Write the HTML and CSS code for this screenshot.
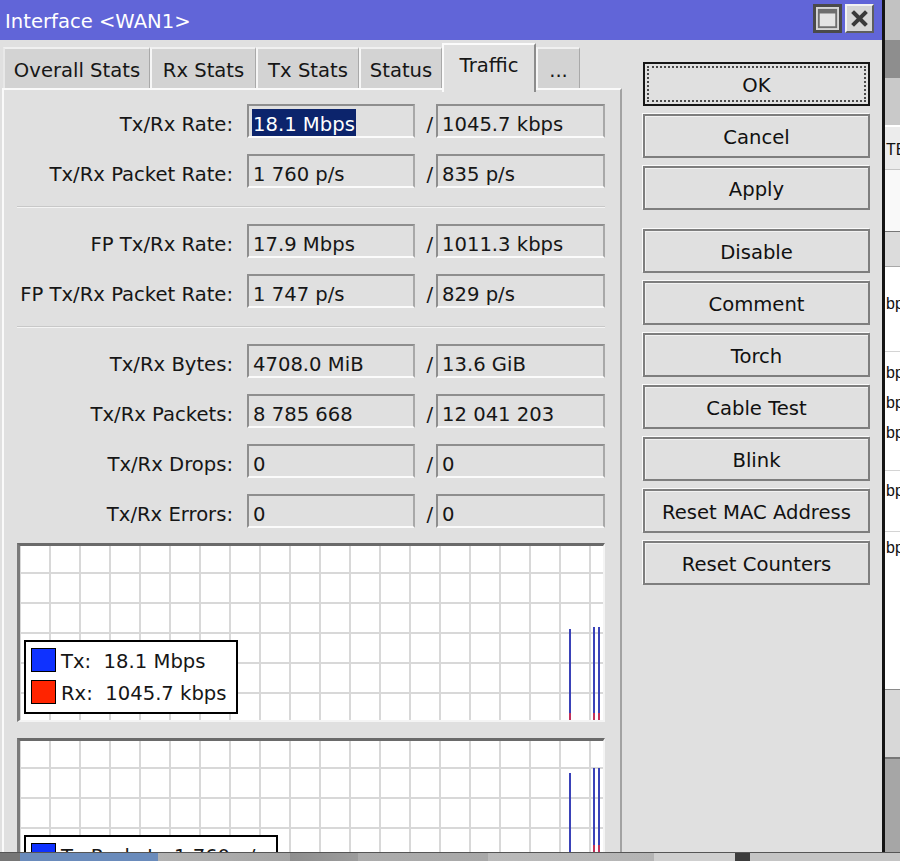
FILE: index.html
```html
<!DOCTYPE html>
<html>
<head>
<meta charset="utf-8">
<title>Interface &lt;WAN1&gt;</title>
<link rel="stylesheet" href="styles.css">
</head>
<body>
<div class="screen">
  <div class="window">
    <div class="titlebar">
      <span class="title">Interface &lt;WAN1&gt;</span>
      <div class="tb-btns">
        <span class="tb-btn tb-max"><svg width="23" height="23" viewBox="0 0 23 23"><rect x="2" y="2" width="19" height="19" fill="#e4e4e4" stroke="#6e6e6e" stroke-width="2"/><rect x="2" y="2" width="19" height="4" fill="#6e6e6e"/></svg></span>
        <span class="tb-btn tb-close"><svg width="23" height="23" viewBox="0 0 23 23"><path d="M6 6 L17 17 M17 6 L6 17" stroke="#3a3a3a" stroke-width="4" stroke-linecap="square"/></svg></span>
      </div>
    </div>
    <div class="main">
      <div class="left">
        <div class="tabs">
          <div class="tab t-overall">Overall Stats</div>
          <div class="tab t-rx">Rx Stats</div>
          <div class="tab t-tx">Tx Stats</div>
          <div class="tab t-status">Status</div>
          <div class="tab tab-active t-traffic">Traffic</div>
          <div class="tab t-more">...</div>
        </div>
        <div class="panel">
          <div class="section">
            <div class="row"><span class="label">Tx/Rx Rate:</span><span class="field field-sel"><span class="sel">18.1 Mbps</span></span><span class="slash">/</span><span class="field">1045.7 kbps</span></div>
            <div class="row"><span class="label">Tx/Rx Packet Rate:</span><span class="field">1 760 p/s</span><span class="slash">/</span><span class="field">835 p/s</span></div>
          </div>
          <div class="sep"></div>
          <div class="section">
            <div class="row"><span class="label">FP Tx/Rx Rate:</span><span class="field">17.9 Mbps</span><span class="slash">/</span><span class="field">1011.3 kbps</span></div>
            <div class="row"><span class="label">FP Tx/Rx Packet Rate:</span><span class="field">1 747 p/s</span><span class="slash">/</span><span class="field">829 p/s</span></div>
          </div>
          <div class="sep"></div>
          <div class="section">
            <div class="row"><span class="label">Tx/Rx Bytes:</span><span class="field">4708.0 MiB</span><span class="slash">/</span><span class="field">13.6 GiB</span></div>
            <div class="row"><span class="label">Tx/Rx Packets:</span><span class="field">8 785 668</span><span class="slash">/</span><span class="field">12 041 203</span></div>
            <div class="row"><span class="label">Tx/Rx Drops:</span><span class="field">0</span><span class="slash">/</span><span class="field">0</span></div>
            <div class="row"><span class="label">Tx/Rx Errors:</span><span class="field">0</span><span class="slash">/</span><span class="field">0</span></div>
          </div>
          <div class="graph g1">
            <svg class="plot" width="583" height="174" viewBox="0 0 583 174">
              <rect x="549" y="83" width="2" height="91" fill="#3a42b8"/>
              <rect x="573" y="81" width="2" height="93" fill="#3a42b8"/>
              <rect x="578" y="81" width="2" height="93" fill="#3a42b8"/>
              <rect x="549" y="167" width="2" height="7" fill="#c2305a"/>
              <rect x="573" y="167" width="2" height="7" fill="#c2305a"/>
              <rect x="578" y="167" width="2" height="7" fill="#c2305a"/>
            </svg>
            <div class="legend lg1">
              <div class="lg-row"><span class="sw sw-tx"></span><span class="lg-text">Tx:  18.1 Mbps</span></div>
              <div class="lg-row"><span class="sw sw-rx"></span><span class="lg-text">Rx:  1045.7 kbps</span></div>
            </div>
          </div>
          <div class="graph g2">
            <svg class="plot" width="583" height="174" viewBox="0 0 583 174">
              <rect x="549" y="32" width="2" height="142" fill="#3a42b8"/>
              <rect x="573" y="27" width="2" height="147" fill="#3a42b8"/>
              <rect x="578" y="27" width="2" height="147" fill="#3a42b8"/>
              <rect x="573" y="104" width="2" height="12" fill="#c2305a"/>
              <rect x="578" y="104" width="2" height="12" fill="#c2305a"/>
            </svg>
            <div class="legend lg2">
              <div class="lg-row"><span class="sw sw-tx"></span><span class="lg-text">Tx Packet:  1 760 p/s</span></div>
              <div class="lg-row"><span class="sw sw-rx"></span><span class="lg-text">Rx Packet:  835 p/s</span></div>
            </div>
          </div>
        </div>
      </div>
      <div class="buttons">
        <div class="btn btn-default"><span class="focus">OK</span></div>
        <div class="btn">Cancel</div>
        <div class="btn">Apply</div>
        <div class="btn btn-group">Disable</div>
        <div class="btn">Comment</div>
        <div class="btn">Torch</div>
        <div class="btn">Cable Test</div>
        <div class="btn">Blink</div>
        <div class="btn">Reset MAC Address</div>
        <div class="btn">Reset Counters</div>
      </div>
    </div>
  </div>
  <div class="behind">
    <div class="bh bh-top"></div>
    <div class="bh bh-dark"></div>
    <div class="bh bh-mid"></div>
    <div class="bh bh-head"><span>TE</span></div>
    <div class="bh bh-white1"></div>
    <div class="bh bh-hdr"></div>
    <div class="bh bh-list">
      <div class="sp sp27"></div>
      <div class="tx">bps</div>
      <div class="sp sp38 ln"></div>
      <div class="sp sp11"></div>
      <div class="tx">bps</div>
      <div class="sp sp10"></div>
      <div class="tx">bps</div>
      <div class="sp sp10"></div>
      <div class="tx">bps</div>
      <div class="sp sp28 ln"></div>
      <div class="sp sp10"></div>
      <div class="tx">bps</div>
      <div class="sp sp31 ln"></div>
      <div class="sp sp6"></div>
      <div class="tx">bps</div>
    </div>
    <div class="bh bh-foot"></div>
    <div class="bh bh-bottom"></div>
  </div>
</div>
<div class="taskbar"></div>
</body>
</html>
```
FILE: styles.css
```css
* { box-sizing: border-box; }
html, body { margin: 0; padding: 0; }
body {
  width: 900px;
  height: 861px;
  overflow: hidden;
  font-family: "DejaVu Sans", "Verdana", sans-serif;
  font-size: 19.6px;
  color: #161616;
  background: #c4c4c4;
}
.screen { display: flex; height: 852px; overflow: hidden; }

.window {
  width: 885px;
  flex: none;
  display: flex;
  flex-direction: column;
  background: #e0e0e0;
  border-right: 3px solid #141414;
  overflow: hidden;
}
.titlebar {
  height: 40px;
  flex: none;
  background: #6165d8;
  display: flex;
  align-items: center;
  justify-content: space-between;
  padding: 0 8px 3px 5px;
  color: #fff;
}
.title { white-space: nowrap; padding-top: 6px; }
.tb-btns { display: flex; gap: 3px; }
.tb-btn {
  width: 29px;
  height: 29px;
  display: flex;
  align-items: center;
  justify-content: center;
  background: #d6d6d6;
}
.tb-max { border: 3px solid #4a4a4a; }
.tb-max svg { width: 21px; height: 21px; }
.tb-close {
  border: 2px solid;
  border-color: #f2f2f2 #5e5e5e #5e5e5e #f2f2f2;
}

.main { display: flex; flex: 1; min-height: 0; }
.left { width: 622px; flex: none; display: flex; flex-direction: column; }

.tabs {
  height: 48px;
  flex: none;
  display: flex;
  align-items: flex-end;
  padding-left: 3px;
  position: relative;
  z-index: 2;
}
.tab {
  height: 41px;
  display: flex;
  align-items: center;
  justify-content: center;
  padding-top: 3px;
  background: #d3d3d3;
  border-left: 2px solid #f6f6f6;
  border-top: 2px solid #f0f0f0;
  border-right: 1px solid #a9a9a9;
  white-space: nowrap;
}
.t-overall { width: 147px; border-left-color: #e8e8e8; }
.t-rx { width: 106px; }
.t-tx { width: 103px; }
.t-status { width: 83px; }
.t-traffic { width: 94px; }
.t-more { width: 44px; }
.tab-active {
  height: 49px;
  margin-bottom: -4px;
  padding-top: 0;
  padding-bottom: 6px;
  background: #e0e0e0;
  border-left: 2px solid #fbfbfb;
  border-top: 2px solid #fbfbfb;
  border-right: 2px solid #8c8c8c;
}

.panel {
  flex: 1;
  margin-left: 2px;
  width: 620px;
  border-top: 2px solid #fafafa;
  border-left: 2px solid #fafafa;
  border-right: 2px solid #a2a2a2;
  padding-top: 14px;
  display: flex;
  flex-direction: column;
  overflow: hidden;
}
.section { display: flex; flex-direction: column; gap: 16px; }
.row {
  display: grid;
  grid-template-columns: 243px 168px 21px 169px;
  height: 34px;
  align-items: center;
}
.label { text-align: right; padding-right: 14px; padding-top: 6px; white-space: nowrap; }
.field {
  height: 34px;
  display: flex;
  align-items: center;
  padding-left: 4px;
  padding-top: 6px;
  white-space: nowrap;
  overflow: hidden;
  border: 2px solid;
  border-color: #8e8e8e #a8a8a8 #fbfbfb #8e8e8e;
}
.field-sel { padding-top: 2px; }
.sel {
  background: #0c246c;
  color: #fff;
  line-height: 22px;
  padding: 5px 1px 0;
  margin-left: -1px;
}
.slash { text-align: right; padding-right: 3px; padding-top: 6px; }
.sep {
  margin: 18px 0 16px 13px;
  width: 588px;
  height: 2px;
  flex: none;
  border-top: 1px solid #c8c8c8;
  border-bottom: 1px solid #f4f4f4;
}

.graph {
  position: relative;
  flex: none;
  margin-left: 13px;
  width: 588px;
  height: 179px;
  border-style: solid;
  border-width: 3px 2px 2px 3px;
  border-color: #6a6a6a #f4f4f4 #f4f4f4 #7a7a7a;
  background-color: #fff;
  background-image:
    linear-gradient(to right, #d8d8d8 2px, transparent 2px),
    linear-gradient(to bottom, #d8d8d8 2px, transparent 2px);
  background-size: 30px 30px;
  background-position: 29px 26px;
}
.g1 { margin-top: 15px; }
.g2 { margin-top: 16px; }
.plot { position: absolute; left: 0; top: 0; }
.legend {
  position: absolute;
  left: 4px;
  top: 94px;
  height: 74px;
  border: 2px solid #000;
  background: #fff;
  padding: 6px 5px 0;
  display: flex;
  flex-direction: column;
  gap: 8px;
}
.lg1 { width: 214px; }
.lg2 { width: 254px; }
.lg-row { display: flex; align-items: center; height: 24px; gap: 5px; }
.sw { width: 25px; height: 24px; border: 1px solid #000; flex: none; }
.sw-tx { background: #0f32ff; }
.sw-rx { background: #ff2400; }
.lg-text { white-space: pre; padding-top: 3px; }

.buttons {
  width: 227px;
  flex: none;
  margin-left: 21px;
  padding-top: 22px;
  display: flex;
  flex-direction: column;
  gap: 8px;
}
.btn {
  height: 44px;
  display: flex;
  align-items: center;
  justify-content: center;
  padding-top: 3px;
  background: #e0e0e0;
  border: 2px solid #7e7e7e;
  box-shadow: -1px -1px 0 #fbfbfb, inset 1px 1px 0 #f2f2f2;
  white-space: nowrap;
  color: #111;
}
.btn-default {
  border: 2px solid #161616;
  box-shadow: none;
  padding: 2px;
}
.focus {
  width: 100%;
  height: 100%;
  display: flex;
  align-items: center;
  justify-content: center;
  padding-top: 3px;
  border: 2px dotted #4a4a4a;
}
.btn-group { margin-top: 11px; }

.behind {
  flex: 1;
  display: flex;
  flex-direction: column;
  overflow: hidden;
  background: #fff;
  color: #111;
  font-family: "Liberation Sans", Arial, sans-serif;
  font-size: 16px;
}
.bh { flex: none; overflow: hidden; white-space: nowrap; }
.bh-top { height: 40px; background: #c2c2c2; }
.bh-dark { height: 38px; background: #8e8e8e; }
.bh-mid { height: 49px; background: #c9c9c9; border-bottom: 2px solid #fff; }
.bh-head { height: 43px; background: #ececec; border-bottom: 1px solid #c6c6c6; padding-top: 13px; line-height: 20px; }
.bh-head span { margin-left: 1px; }
.bh-white1 { height: 62px; background: #f9f9f9; border-bottom: 1px solid #777; }
.bh-hdr { height: 35px; background: #dcdcdc; border-bottom: 1px solid #a8a8a8; }
.bh-list { height: 422px; background: #fff; }
.sp { height: 10px; }
.sp6 { height: 6px; }
.sp10 { height: 10px; }
.sp11 { height: 11px; }
.sp27 { height: 27px; }
.sp28 { height: 28px; }
.sp31 { height: 31px; }
.sp38 { height: 38px; }
.ln { border-bottom: 1px solid #d4d4d4; }
.tx { height: 20px; line-height: 20px; padding-left: 1px; }
.bh-foot { height: 70px; background: #d8d8d8; border-top: 1px solid #8a8a8a; border-bottom: 2px solid #777; }
.bh-bottom { height: 120px; background: #a6a6a6; }

.taskbar {
  height: 9px;
  border-top: 1px solid #555;
  background: linear-gradient(to right,
    #767676 0, #767676 20px,
    #6a8bbb 20px, #6a8bbb 158px,
    #b2b2b2 158px, #a4a4a4 290px,
    #8e8e8e 290px, #9c9c9c 358px,
    #acacac 358px, #a8a8a8 488px,
    #bababa 488px, #b4b4b4 654px,
    #cfcfcf 654px, #cfcfcf 735px,
    #3c3c3c 735px, #3c3c3c 750px,
    #c4c4c4 750px, #c4c4c4 900px);
}
```
